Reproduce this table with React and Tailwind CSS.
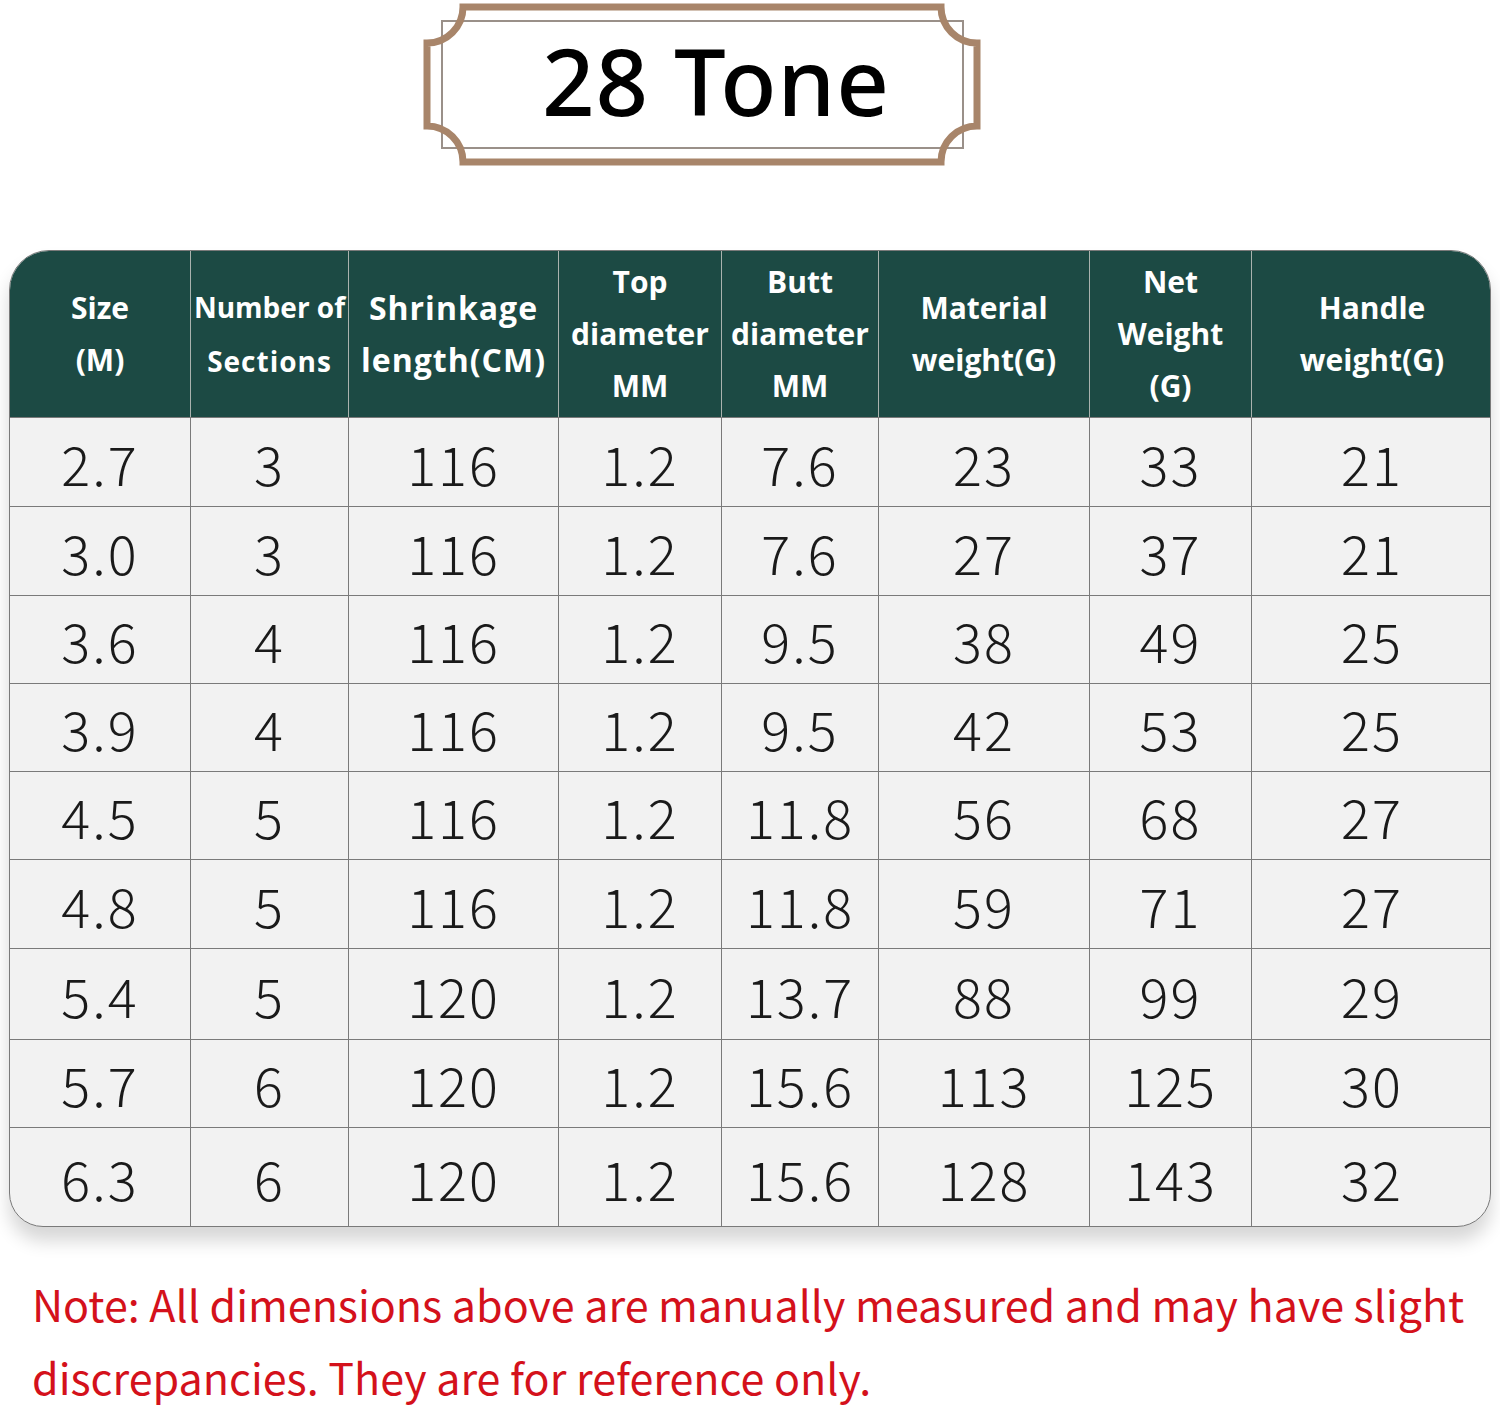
const heads = [
  { lines: ["Size", "(M)"] },
  { lines: ["Number of", "Sections"], small: true },
  { lines: ["Shrinkage", "length(CM)"], wide: true },
  { lines: ["Top", "diameter", "MM"] },
  { lines: ["Butt", "diameter", "MM"] },
  { lines: ["Material", "weight(G)"] },
  { lines: ["Net", "Weight", "(G)"] },
  { lines: ["Handle", "weight(G)"] },
];

const rows = [
  ["2.7", "3", "116", "1.2", "7.6", "23", "33", "21"],
  ["3.0", "3", "116", "1.2", "7.6", "27", "37", "21"],
  ["3.6", "4", "116", "1.2", "9.5", "38", "49", "25"],
  ["3.9", "4", "116", "1.2", "9.5", "42", "53", "25"],
  ["4.5", "5", "116", "1.2", "11.8", "56", "68", "27"],
  ["4.8", "5", "116", "1.2", "11.8", "59", "71", "27"],
  ["5.4", "5", "120", "1.2", "13.7", "88", "99", "29"],
  ["5.7", "6", "120", "1.2", "15.6", "113", "125", "30"],
  ["6.3", "6", "120", "1.2", "15.6", "128", "143", "32"],
];

const rowH = ["h-[89px]", "h-[89px]", "h-[88px]", "h-[88px]", "h-[88px]", "h-[89px]", "h-[91px]", "h-[88px]", "h-[98px]"];

const cols = "grid grid-cols-[181px_158px_210px_163px_157px_211px_162px_240px]";

function Frame() {
  return (
    <div className="relative ml-[422px] mt-[2px] w-[560px] h-[165px] flex items-center justify-center">
      <svg className="absolute inset-0" width="560" height="165" viewBox="0 0 560 165">
        <rect x="20" y="19" width="521" height="127" fill="none" stroke="#9a9089" strokeWidth="2" />
        <path
          d="M41 5 A36 36 0 0 1 5 41 L5 124 A36 36 0 0 1 41 160 L519 160 A36 36 0 0 1 555 124 L555 41 A36 36 0 0 1 519 5 Z"
          fill="none"
          stroke="#a8856a"
          strokeWidth="7"
        />
      </svg>
      <span className="relative ml-[28px] mb-[8px] text-[92px] leading-none font-medium text-black font-['Noto_Sans','DejaVu_Sans',sans-serif] tracking-[1px]">
        28 Tone
      </span>
    </div>
  );
}

function headClass(h) {
  if (h.small) return "text-[28px] leading-[54px]";
  if (h.wide) return "text-[32px] leading-[52px] tracking-[1px]";
  return "text-[30px] leading-[52px]";
}

export default function App() {
  return (
    <div className="w-[1500px] h-[1407px] bg-white overflow-hidden">
      <Frame />
      <div className="ml-[9px] mt-[83px] w-[1482px] rounded-t-[40px] rounded-b-[34px] border border-[#7a7a7a] overflow-hidden bg-[#f2f2f2] shadow-[0_14px_18px_rgba(0,0,0,0.16)]">
        <div className={`${cols} h-[167px] bg-[#1c4a44] border-b border-[#7a7a7a]`}>
          {heads.map((h, i) => (
            <div
              key={i}
              className={`flex flex-col items-center justify-center text-white font-bold font-['Open_Sans','DejaVu_Sans',sans-serif] ${
                i < 7 ? "border-r border-[#a9b2ae]" : ""
              } ${headClass(h)}`}
            >
              {h.lines.map((l, j) => (
                <span key={j} className={h.small && j === 1 ? "tracking-[1px]" : ""}>
                  {l}
                </span>
              ))}
            </div>
          ))}
        </div>
        {rows.map((r, ri) => (
          <div
            key={ri}
            className={`${cols} ${rowH[ri]} ${ri < rows.length - 1 ? "border-b border-[#7a7a7a]" : ""}`}
          >
            {r.map((v, ci) => (
              <div
                key={ci}
                className={`flex items-center justify-center text-[54px] font-light text-[#1a1a1a] font-['Noto_Sans_CJK_SC','Noto_Sans',sans-serif] tracking-[2px] ${
                  ci < 7 ? "border-r border-[#7a7a7a]" : ""
                }`}
              >
                {v}
              </div>
            ))}
          </div>
        ))}
      </div>
      <p className="mt-[40px] pl-[32px] text-[43px] leading-[73px] text-[#d4111b] font-['Noto_Sans_CJK_SC','Noto_Sans',sans-serif]">
        Note: All dimensions above are manually measured and may have slight discrepancies. They are for reference only.
      </p>
    </div>
  );
}
